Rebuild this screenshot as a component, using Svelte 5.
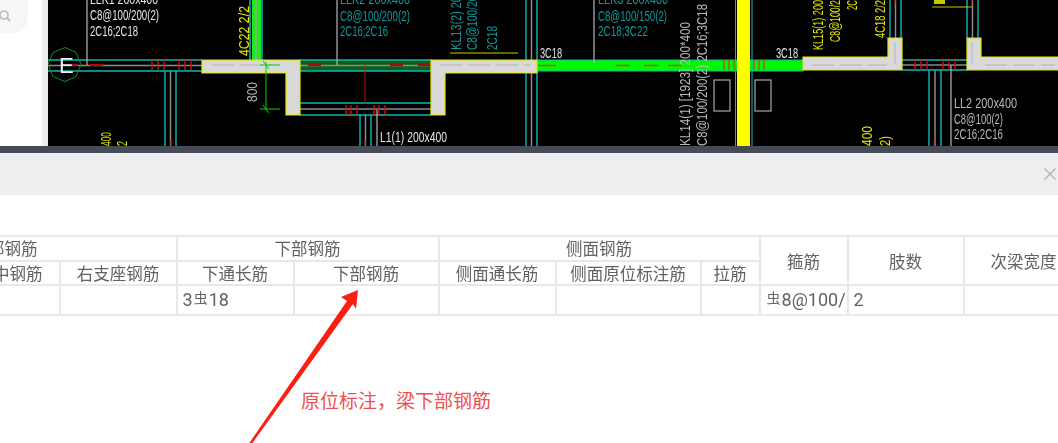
<script lang="ts">
  // drawing text: x, y, rotated?, width in px, colour, label
  const cyan = "#12b5b5";
  const teal = "#0e9a9a";
  const white = "#e6e6e6";
  const gray = "#b9b9b9";
  const yellow = "#e8e800";

  const notes = [
    { x: 90, y: 4, w: 68, c: white, t: "LLK1 200x400" },
    { x: 90, y: 20, w: 69, c: white, t: "C8@100/200(2)" },
    { x: 90, y: 36, w: 48, c: white, t: "2C16;2C18" },
    { x: 340, y: 4, w: 70, c: teal, t: "LLK2 200x400" },
    { x: 340, y: 21, w: 70, c: teal, t: "C8@100/200(2)" },
    { x: 340, y: 36, w: 48, c: teal, t: "2C16;2C16" },
    { x: 598, y: 4, w: 70, c: teal, t: "LLK3 200x400" },
    { x: 598, y: 21, w: 69, c: teal, t: "C8@100/150(2)" },
    { x: 598, y: 36, w: 50, c: teal, t: "2C18;3C22" },
    { x: 540, y: 58, w: 22, c: white, t: "3C18" },
    { x: 776, y: 58, w: 22, c: white, t: "3C18" },
    { x: 380, y: 142, w: 67, c: white, t: "L1(1) 200x400" },
    { x: 954, y: 108, w: 63, c: gray, t: "LL2 200x400" },
    { x: 954, y: 124, w: 49, c: gray, t: "C8@100(2)" },
    { x: 954, y: 139, w: 49, c: gray, t: "2C16;2C16" },
  ];

  const sideNotes = [
    { x: 249, y: 56, w: 50, c: yellow, t: "4C22 2/2" },
    { x: 461, y: 50, w: 60, c: teal, t: "KL13(2) 200" },
    { x: 477, y: 50, w: 60, c: teal, t: "C8@100/200" },
    { x: 497, y: 50, w: 24, c: teal, t: "2C18" },
    { x: 690, y: 146, w: 124, c: gray, t: "KL14(1) [1923] 200*400" },
    { x: 707, y: 146, w: 142, c: gray, t: "C8@100/200(2) 2C16;3C18" },
    { x: 823, y: 50, w: 50, c: yellow, t: "KL15(1) 200" },
    { x: 840, y: 42, w: 42, c: yellow, t: "C8@100/2" },
    { x: 857, y: 10, w: 10, c: yellow, t: "2C" },
    { x: 885, y: 38, w: 38, c: yellow, t: "4C18 2/2" },
    { x: 257, y: 102, w: 20, c: gray, t: "800" },
    { x: 111, y: 146, w: 14, c: yellow, t: "400" },
    { x: 127, y: 146, w: 5, c: yellow, t: "2" },
    { x: 872, y: 146, w: 20, c: yellow, t: "400" },
    { x: 890, y: 146, w: 10, c: yellow, t: "2)" },
  ];

  const hBeams = [
    { x1: 48, x2: 202, top: 60, bottom: 71 },
    { x1: 300, x2: 431, top: 60, bottom: 71 },
    { x1: 300, x2: 431, top: 103, bottom: 115 },
    { x1: 902, x2: 967, top: 60, bottom: 70 },
  ];

  const vBeams = [
    { x1: 165, x2: 176, y1: 71, y2: 146 },
    { x1: 360, x2: 371, y1: 115, y2: 146 },
    { x1: 929, x2: 941, y1: 70, y2: 146 },
    { x1: 890, x2: 901, y1: 0, y2: 38 },
    { x1: 967, x2: 978, y1: 0, y2: 38 },
    { x1: 526, x2: 537, y1: 0, y2: 60 },
    { x1: 526, x2: 537, y1: 71, y2: 146 },
  ];

  const redTicks = [
    152, 158, 164, 179, 185, 191, 346, 351, 357, 374, 379, 385, 915, 921, 927,
    943, 949, 955,
  ];
  const darkTicks = [724, 729, 734, 754, 759, 764];

  const columns = [127, 100, 117, 117, 145, 117, 145, 59, 88, 116, 120];
</script>

<div class="page">
  <div class="cad">
    <div class="gutter">
      <div class="search">
        <svg width="14" height="14" viewBox="0 0 14 14" aria-hidden="true">
          <circle cx="4" cy="5" r="4" fill="none" stroke="#bbb" stroke-width="1.6" />
          <path d="M7 8l3 3" stroke="#bbb" stroke-width="1.8" />
        </svg>
      </div>
    </div>
    <svg class="drawing" viewBox="48 0 1010 146" aria-label="Beam plan drawing">
      <!-- green beams -->
      <rect x="252" y="0" width="9" height="60" fill="#22e622" />
      <path d="M250 0V60M262 0V60" stroke={cyan} stroke-width="1.5" />
      <path d="M256 0V63" stroke="#a5a5a5" />
      <rect x="300" y="60" width="131" height="11" fill="#0b5f16" />
      <rect x="537" y="60" width="266" height="11" fill="#00f800" stroke={cyan} />
      <path d="M538 65.5h18M616 65.5h14M644 65.5h14M668 65.5h14" stroke="#b35a10" stroke-width="1.5" />

      {#each hBeams as b}
        <path d="M{b.x1} {b.top}H{b.x2}M{b.x1} {b.bottom}H{b.x2}" stroke={cyan} stroke-width="1.4" />
        <path d="M{b.x1} {(b.top + b.bottom) / 2}H{b.x2}" stroke="#8a8a8a" stroke-width="1.5" />
      {/each}
      {#each vBeams as b}
        <path d="M{b.x1} {b.y1}V{b.y2}M{b.x2} {b.y1}V{b.y2}" stroke={cyan} stroke-width="1.4" />
        <path d="M{(b.x1 + b.x2) / 2} {b.y1}V{b.y2}" stroke="#8a8a8a" stroke-width="1.5" />
      {/each}
      <path d="M72 65h6M90 65h13M308 65h13M390 65h13M418 65h13" stroke="#a80c0c" stroke-width="2" />
      <path d="M365 65V104M171 140V146M365 140V146M934 140V146M895 0V3M972 0V3" stroke="#c01010" stroke-width="1" />
      {#each redTicks as x}
        <path d="M{x} {x > 900 ? 60 : x > 300 ? 105 : 60}v10" stroke="#d01010" stroke-width="1.4" />
      {/each}

      <!-- yellow column -->
      <rect x="737" y="0" width="13" height="146" fill="#ffff00" />
      <path d="M735.5 0V146M752 0V146" stroke={cyan} />
      {#each darkTicks as x}
        <path d="M{x} 60v10" stroke="#b35a10" stroke-width="1.4" />
      {/each}
      <rect x="714" y="80" width="16" height="31" fill="none" stroke="#a8a8a8" stroke-width="1.2" />
      <rect x="755" y="80" width="16" height="31" fill="none" stroke="#a8a8a8" stroke-width="1.2" />

      <!-- wall blocks -->
      <g fill="#d9d9d9" stroke="#e6e600" stroke-width="1.2">
        <path d="M202 60H300V115H286V73H202Z" />
        <path d="M537 60H431V115H445V73H537Z" />
        <path d="M803 57H888V38H902V70H803Z" />
        <path d="M1060 57H981V38H967V70H1060" />
      </g>
      <path d="M212 65h60M440 65h90M812 65h75M985 65h70M895 42V66M972 42V66" stroke="#b5b5b5" stroke-dasharray="22 6" />

      <!-- leader lines -->
      <path d="M87 0V65M337 0V65M594 0V63M377 110V146M951 65V146" stroke="#b5b5b5" stroke-width="1.2" />
      <path d="M450 53H518" stroke="#8a8a00" stroke-width="1.5" />
      <path d="M932 7H972" stroke="#c8c800" stroke-width="1.2" />
      <rect x="934" y="0" width="11" height="4" fill="#c8c800" />

      <!-- 800 dimension -->
      <path d="M266 62V110M260 65H280M260 109H280M263 61l6 8M263 105l6 8" stroke="#00d000" stroke-width="1" />

      <!-- grid bubble -->
      <path d="M65 47.5l11 5 5 12-5 12-11 5-12-5-5-12 5-12Z" fill="none" stroke="#0c8f2a" stroke-width="1" />
      <text class="bubble" x="59" y="73">E</text>

      {#each notes as n}
        <text class="note" x={n.x} y={n.y} fill={n.c} textLength={n.w} lengthAdjust="spacingAndGlyphs">{n.t}</text>
      {/each}
      {#each sideNotes as n}
        <text
          class="note"
          transform="translate({n.x} {n.y}) rotate(-90)"
          fill={n.c}
          textLength={n.w}
          lengthAdjust="spacingAndGlyphs">{n.t}</text>
      {/each}
    </svg>
  </div>

  <div class="divider"></div>

  <header class="title-bar">
    <svg width="14" height="14" viewBox="0 0 14 14" aria-label="Close">
      <path d="M1.5 1.5l11 11M12.5 1.5l-11 11" stroke="#b4b4b4" stroke-width="1.4" />
    </svg>
  </header>

  <main class="panel">
    <table>
      <colgroup>
        {#each columns as w}
          <col style="width: {w}px" />
        {/each}
      </colgroup>
      <thead>
        <tr>
          <th colspan="3">上部钢筋</th>
          <th colspan="2">下部钢筋</th>
          <th colspan="3">侧面钢筋</th>
          <th rowspan="2">箍筋</th>
          <th rowspan="2">肢数</th>
          <th rowspan="2">次梁宽度</th>
        </tr>
        <tr>
          <th>左支座钢筋</th>
          <th>跨中钢筋</th>
          <th>右支座钢筋</th>
          <th>下通长筋</th>
          <th>下部钢筋</th>
          <th>侧面通长筋</th>
          <th>侧面原位标注筋</th>
          <th>拉筋</th>
        </tr>
      </thead>
      <tbody>
        <tr>
          <td></td>
          <td></td>
          <td></td>
          <td>3<span class="rebar">虫</span>18</td>
          <td></td>
          <td></td>
          <td></td>
          <td></td>
          <td class="clip"><span class="rebar">虫</span>8@100/</td>
          <td>2</td>
          <td></td>
        </tr>
      </tbody>
    </table>

    <svg class="arrow" width="130" height="160" viewBox="240 285 130 160" aria-hidden="true">
      <path d="M358 290L341 297L347 301L248 445L251 445L353 304L356 309Z" fill="#fb1e14" />
    </svg>
    <p class="annotation">原位标注，梁下部钢筋</p>
  </main>
</div>

<style>
  :global(body) {
    margin: 0;
    background: #fff;
    overflow: hidden;
  }

  .page {
    position: relative;
    width: 1058px;
    height: 443px;
    overflow: hidden;
    font-family: "Noto Sans CJK SC", "Noto Sans", sans-serif;
  }

  .cad {
    display: flex;
    height: 146px;
  }

  .gutter {
    width: 48px;
    flex-shrink: 0;
    box-sizing: border-box;
    background: linear-gradient(to right, #fff 41px, #f0f0f0 42px, #e8e8e8 48px);
  }

  .search {
    display: flex;
    align-items: center;
    width: 28px;
    height: 33px;
    border-radius: 0 0 16px 0;
    background: #f6f6f6;
    overflow: hidden;
  }

  .search svg {
    margin-top: 1px;
  }

  .drawing {
    display: block;
    width: 1010px;
    height: 146px;
    background: #000;
    filter: blur(0.6px);
  }

  .note {
    font-family: "Liberation Sans", sans-serif;
    font-size: 15px;
  }

  .bubble {
    font-family: "Liberation Sans", sans-serif;
    font-size: 22px;
    fill: #eee;
  }

  .divider {
    height: 7px;
    background: #454c55;
  }

  .title-bar {
    display: flex;
    align-items: center;
    justify-content: flex-end;
    box-sizing: border-box;
    height: 42px;
    padding-right: 1px;
    background: #eeeef0;
  }

  .panel {
    padding-top: 40px;
  }

  table {
    table-layout: fixed;
    width: 1110px;
    margin-left: -168.5px;
    border-collapse: collapse;
    color: #606266;
    font-size: 16.5px;
    line-height: 20px;
    filter: blur(0.4px);
  }

  th,
  td {
    box-sizing: border-box;
    padding: 0;
    border: 2px solid #e8e8e8;
    font-weight: 400;
    text-align: center;
    white-space: nowrap;
  }

  thead tr {
    height: 24.5px;
  }

  tbody tr {
    height: 30px;
  }

  td {
    padding-left: 5px;
    font-family: "Roboto", "Noto Sans CJK SC", sans-serif;
    font-size: 18px;
    text-align: left;
    overflow: hidden;
  }

  .rebar {
    position: relative;
    top: -3px;
    margin: 0 1px;
    font-family: "Noto Sans CJK SC", sans-serif;
    font-size: 14px;
  }

  .arrow {
    position: absolute;
    left: 240px;
    top: 285px;
  }

  .annotation {
    position: absolute;
    left: 301px;
    top: 386px;
    margin: 0;
    color: #f04f4f;
    font-size: 19px;
    line-height: 28px;
  }
</style>
